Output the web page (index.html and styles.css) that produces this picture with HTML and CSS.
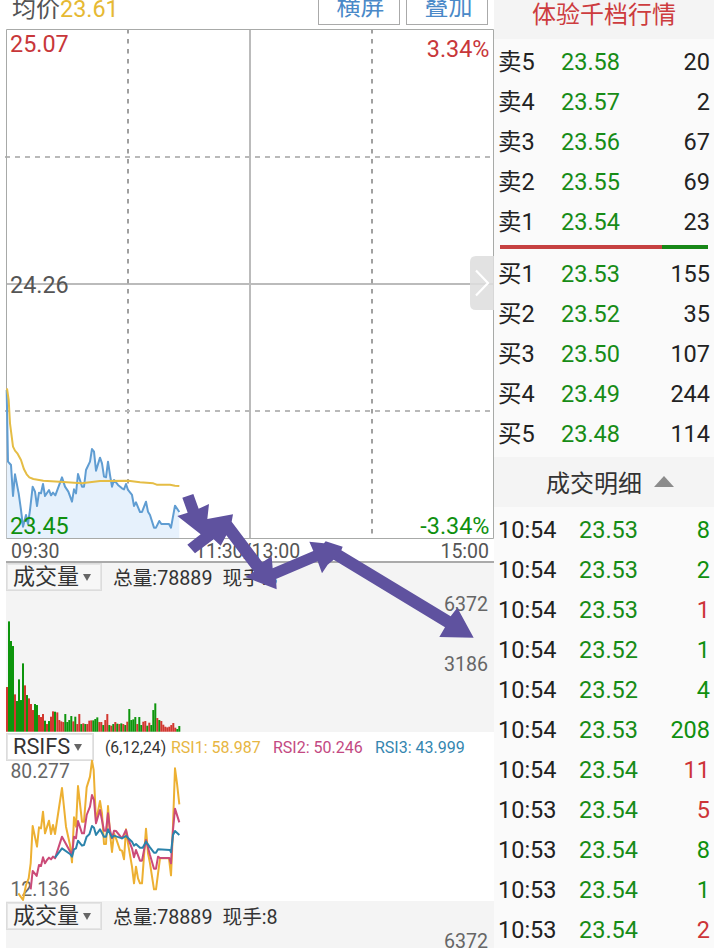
FILE: index.html
```html
<!DOCTYPE html>
<html lang="zh-CN">
<head>
<meta charset="utf-8">
<title>分时行情</title>
<link rel="stylesheet" href="styles.css">
</head>
<body>
<main class="app">
  <section class="left">
    <header class="topbar">
      <div class="average">均价<span>23.61</span></div>
      <div class="buttons"><button>横屏</button><button>叠加</button></div>
    </header>
    <svg class="price" viewBox="6 29 488 510">
      <g class="axis">
        <path d="M250 29V539M6 284H494"/>
        <path class="dash-v" d="M128 29V535M372 29V535"/>
        <path class="dash-h" d="M5 157H494M5 411H494"/>
      </g>
      <path class="frame" d="M6.500 29.500H493.500V538.500H6.500Z"/>
      <g transform="translate(0 380) scale(.33333)">
        <path class="area" d="M20 30L24 245 33 255 39 348 45 283 56 340 63 390 69 440 78 405 84 432 90 390 98 320 105 335 111 378 117 338 123 340 129 312 135 348 147 330 153 346 159 338 166 346 186 292 195 320 205 335 216 365 222 328 228 340 234 282 246 320 252 320 258 270 270 245 276 207 282 215 288 272 300 233 306 250 312 290 318 292 324 245 330 285 336 320 342 300 354 315 366 325 372 328 378 312 384 330 396 345 402 378 408 367 420 396 426 396 438 365 444 395 450 405 462 443 468 443 478 423 484 432 507 432 513 443 525 377 538 396V474H20Z"/>
        <path class="line blue" d="M20 30L24 245 33 255 39 348 45 283 56 340 63 390 69 440 78 405 84 432 90 390 98 320 105 335 111 378 117 338 123 340 129 312 135 348 147 330 153 346 159 338 166 346 186 292 195 320 205 335 216 365 222 328 228 340 234 282 246 320 252 320 258 270 270 245 276 207 282 215 288 272 300 233 306 250 312 290 318 292 324 245 330 285 336 320 342 300 354 315 366 325 372 328 378 312 384 330 396 345 402 378 408 367 420 396 426 396 438 365 444 395 450 405 462 443 468 443 478 423 484 432 507 432 513 443 525 377 538 396"/>
        <path class="line gold" d="M21 25L26 60 30 130 39 200 45 212 52 220 63 240 72 268 80 283 88 292 100 297 130 302 190 306 245 310 300 303 385 302 420 307 460 310 470 314 510 314 525 317 538 318"/>
      </g>
      <g class="scale">
        <text class="up" x="10" y="52">25.07</text>
        <text class="up" x="489.500" y="57" text-anchor="end">3.34%</text>
        <text x="10" y="293">24.26</text>
        <text class="down" x="10" y="534">23.45</text>
        <text class="down" x="489.500" y="534" text-anchor="end">-3.34%</text>
      </g>
      <path class="tab" d="M494 256H476Q470 256 470 262V304Q470 310 476 310H494Z"/>
      <path class="chevron" d="M476 270.500L488 283 476 295.500"/>
    </svg>
    <div class="times"><span>09:30</span><span>11:30/13:00</span><span>15:00</span></div>
    <section class="panel volume">
      <div class="panel-head"><button class="select">成交量<i></i></button><span>总量:78889</span><span>现手:8</span></div>
      <svg class="plot" id="bars" viewBox="6 604 488 128">
        <text x="488" y="610.500" text-anchor="end">6372</text>
        <text x="488" y="670.500" text-anchor="end">3186</text>
      </svg>
    </section>
    <section class="panel rsi">
      <div class="panel-head"><button class="select">RSIFS<i></i></button><div class="rsi-values"><span>(6,12,24)</span><span class="c1">RSI1: 58.987</span><span class="c2">RSI2: 50.246</span><span class="c3">RSI3: 43.999</span></div></div>
      <svg class="plot" viewBox="6 760 488 141">
        <text class="rsi-scale" x="10.500" y="778">80.277</text>
        <text class="rsi-scale" x="10.500" y="896">12.136</text>
        <g transform="translate(0 730) scale(.33333)">
          <path class="line amber" d="M55 490L69 510 78 465 86 445 92 400 98 288 111 350 117 292 123 295 129 245 135 310 147 272 153 312 159 285 165 312 186 174 198 290 210 345 216 397 222 262 228 290 234 168 246 275 252 275 260 172 270 140 276 92 281 120 288 275 300 213 306 250 312 342 318 342 324 228 330 310 336 366 342 310 348 325 360 360 366 362 372 388 378 298 384 340 396 410 402 460 408 410 414 445 420 460 426 460 438 296 444 370 450 400 462 478 468 478 480 385 507 385 513 436 516 370 525 115 531 160 538 223"/>
          <path class="line pink" d="M92 478L98 423 110 438 117 405 123 408 129 382 135 400 141 390 147 383 153 388 159 380 165 385 186 320 216 375 222 320 228 325 234 273 246 310 252 310 260 255 270 230 276 195 282 210 288 280 300 240 312 302 318 302 324 250 330 300 336 325 342 302 348 303 366 325 378 300 384 325 396 355 402 382 408 360 420 392 426 392 438 330 450 375 462 416 468 416 474 380 480 384 508 384 513 400 519 300 525 236 538 277"/>
          <path class="line teal" d="M165 383L186 355 210 372 216 380 222 358 228 355 234 332 246 347 252 345 260 320 268 313 276 288 282 293 288 315 300 298 312 320 318 320 324 298 336 323 342 317 366 325 378 318 396 335 402 347 408 342 420 353 428 353 438 335 450 352 462 368 468 368 474 358 510 360 513 367 519 315 525 303 538 315"/>
        </g>
      </svg>
    </section>
    <section class="panel volume second">
      <div class="panel-head"><button class="select">成交量<i></i></button><span>总量:78889</span><span>现手:8</span></div>
      <div class="max">6372</div>
    </section>
    <svg class="trend" viewBox="0 0 330 170">
      <g transform="scale(.33333)">
        <path d="M37 53L70 42 86 86 117 72 112 117 189 103 185 125 277 247 305 229 308 265 430 213 418 185 462 190 467 184 518 200 514 211 842 409 862 383 911 473 808 471 825 442 491 239 473 254 456 280 443 244 318 297 320 328 226 291 252 275 169 166 152 197 131 178 75 220 52 194 92 163 22 108 53 98Z"/>
      </g>
    </svg>
  </section>
  <aside class="right">
    <h2 class="depth-title">体验千档行情</h2>
    <div class="rows book">
      <div class="row"><span>卖5</span><b>23.58</b><em>20</em></div>
      <div class="row"><span>卖4</span><b>23.57</b><em>2</em></div>
      <div class="row"><span>卖3</span><b>23.56</b><em>67</em></div>
      <div class="row"><span>卖2</span><b>23.55</b><em>69</em></div>
      <div class="row"><span>卖1</span><b>23.54</b><em>23</em></div>
    </div>
    <div class="ratio"></div>
    <div class="rows book">
      <div class="row"><span>买1</span><b>23.53</b><em>155</em></div>
      <div class="row"><span>买2</span><b>23.52</b><em>35</em></div>
      <div class="row"><span>买3</span><b>23.50</b><em>107</em></div>
      <div class="row"><span>买4</span><b>23.49</b><em>244</em></div>
      <div class="row"><span>买5</span><b>23.48</b><em>114</em></div>
    </div>
    <h2 class="detail-title"><span>成交明细</span><i></i></h2>
    <div class="rows trades">
      <div class="row"><span>10:54</span><b>23.53</b><em class="down">8</em></div>
      <div class="row"><span>10:54</span><b>23.53</b><em class="down">2</em></div>
      <div class="row"><span>10:54</span><b>23.53</b><em class="up">1</em></div>
      <div class="row"><span>10:54</span><b>23.52</b><em class="down">1</em></div>
      <div class="row"><span>10:54</span><b>23.52</b><em class="down">4</em></div>
      <div class="row"><span>10:54</span><b>23.53</b><em class="down">208</em></div>
      <div class="row"><span>10:54</span><b>23.54</b><em class="up">11</em></div>
      <div class="row"><span>10:53</span><b>23.54</b><em class="up">5</em></div>
      <div class="row"><span>10:53</span><b>23.54</b><em class="down">8</em></div>
      <div class="row"><span>10:53</span><b>23.54</b><em class="down">1</em></div>
      <div class="row"><span>10:53</span><b>23.54</b><em class="up">2</em></div>
    </div>
  </aside>
</main>
<script src="bars.js"></script>
</body>
</html>
```
FILE: styles.css
```css
* { box-sizing: border-box; }
body { margin: 0; background: #fff; font-family: Roboto, "Noto Sans CJK SC", sans-serif; font-size: 24px; color: #222; }
button { font-family: inherit; padding: 0; margin: 0; }
svg { display: block; overflow: visible; }
.app { display: flex; width: 714px; height: 948px; overflow: hidden; }
.left { position: relative; width: 494px; padding-left: 6px; flex: none; }
.topbar { display: flex; justify-content: space-between; height: 29px; padding: 0 6px; overflow: hidden; }
.average { margin-top: -9px; line-height: 36px; color: #555; }
.average span { color: #e6b933; font-size: 23.400px; }
.buttons { display: flex; gap: 6px; }
.buttons button { width: 82px; height: 36px; margin-top: -11px; padding-left: 3px; border: 1px solid #aaa; background: #fff; color: #4a89c8; font-size: 24px; line-height: 34px; }
.price { width: 488px; height: 510px; }
.frame { fill: none; stroke: #a8aaa8; }
.axis path { fill: none; stroke: #bbb; stroke-width: 2; }
.axis .dash-v { stroke: #a0a0a0; stroke-dasharray: 4.500 5.500; }
.axis .dash-h { stroke: #b9b9b9; stroke-dasharray: 5 5; }
.area { fill: #e6f1fc; }
.line { fill: none; stroke-width: 6; stroke-linejoin: round; }
.blue { stroke: #609dd2; }
.gold { stroke: #e5bd45; }
.amber { stroke: #edb032; }
.pink { stroke: #cb4b78; }
.teal { stroke: #2b83ab; }
.scale text { fill: #555; font-size: 23.400px; }
.up, .scale .up { color: #cd3438; fill: #c8373a; }
.down, .scale .down { color: #0f900f; fill: #0f900f; }
.tab { fill: #dedede; fill-opacity: .87; }
.chevron { fill: none; stroke: #fff; stroke-width: 2.200; }
.times { display: grid; grid-template-columns: 184px 1fr auto; height: 24px; padding: 0 5px; border-bottom: 2px solid #aaa; color: #555; font-size: 19.500px; line-height: 25px; }
.panel { position: relative; }
.volume { height: 169px; background: #f4f4f4; }
.rsi { height: 169px; background: #fff; }
.panel-head { display: flex; height: 28px; gap: 10px; font-size: 19.700px; line-height: 28px; color: #333; }
.volume .panel-head { height: 41px; }
.panel-head > span { margin-top: 2px; }
.select { display: flex; align-items: center; flex: none; width: 96px; height: 28px; margin: 0 1px 0 0; padding-left: 6px; border: 1px solid #dcdcdc; outline: 1px solid #e5e5e5; outline-offset: -2px; background: #f7f7f7; font-size: 22px; line-height: 26px; color: #333; }
.select i { margin-left: 4px; border: 4px solid transparent; border-top: 7px solid #666; border-bottom: 0; }
.plot { width: 488px; }
.plot text { fill: #666; font-size: 19.600px; }
.plot .rsi-scale { font-size: 19.300px; }
.volume .plot { height: 128px; }
.rsi .plot { height: 141px; }
.rsi .select { width: 88px; margin-top: 1px; background: #fff; font-size: 21.800px; }
.rsi-values { display: flex; font-size: 16px; margin-top: 2px; }
.rsi-values span:first-child { width: 66px; font-size: 15.700px; }
.c1 { color: #e7b642; width: 102px; }
.c2 { color: #c34982; width: 102px; }
.c3 { color: #3586b0; }
.bar-up { fill: #d2372f; }
.bar-down { fill: #0d950c; }
.second { height: 47px; overflow: hidden; }
.second .panel-head { height: 31px; padding-top: 1px; }
.max { padding-right: 6px; color: #666; font-size: 19.600px; line-height: 20px; text-align: right; }
.trend { position: absolute; left: 170px; top: 480px; width: 330px; height: 170px; fill: #5f529f; }
.right { width: 220px; flex: none; background: #fafafa; }
h2 { margin: 0; font-size: 24px; font-weight: 400; background: #f4f4f4; }
.depth-title { height: 39px; padding-left: 38px; line-height: 31px; color: #cd3c3e; margin-bottom: 3px; }
.row { display: grid; height: 40px; padding: 0 4px; line-height: 40px; font-size: 23.500px; }
.book .row { grid-template-columns: 63px 80px 1fr; }
.trades .row { grid-template-columns: 81px 80px 1fr; }
.row b { color: #178c17; font-weight: 400; }
.row em { font-style: normal; text-align: right; }
.ratio { height: 4px; margin: 3px 6px 5px; background: linear-gradient(90deg, #c64141 0 162px, #178717 162px); }
.detail-title { display: flex; align-items: center; height: 50px; margin: 3px 0; padding-left: 52px; color: #333; }
.detail-title span { margin-top: -2px; }
.detail-title i { margin-left: 12px; margin-top: -1px; border: 10px solid transparent; border-bottom: 11px solid #8b8b8b; border-top: 0; }
```
FILE: bars.js
```js
// Direction (r = up, g = down) and height of each minute's volume, in thirds of a pixel.
const volumes = "r134 g331 g272 g257 r112 g92 g157 g95 g205 r139 g110 r100 r83 r65 g83 g80 r50 r44 r53 g33 r23 g32 r45 r61 g60 r58 r35 r31 r29 g53 g29 g35 g47 r31 g45 r23 r53 g23 r25 g23 r23 r33 r34 g34 g38 g43 r29 r29 g20 r35 r53 g20 r18 g23 r29 g24 r23 g25 r23 g20 r30 g68 g35 g37 g44 r23 g44 g20 r30 r32 g18 r27 g20 g65 g85 r41 g35 r32 r21 r15 r13 r15 r20 r26 r12 g8 g17".split(" ");
const chart = document.getElementById("bars");
volumes.forEach((item, i) => {
  const bar = document.createElementNS("http://www.w3.org/2000/svg", "rect");
  const height = Number(item.slice(1)) / 3;
  bar.setAttribute("class", item[0] === "r" ? "bar-up" : "bar-down");
  bar.setAttribute("x", 6 + i * 2 + (i > 24 ? 0.300 : 0));
  bar.setAttribute("y", 731.700 - height);
  bar.setAttribute("width", 2);
  bar.setAttribute("height", height);
  chart.appendChild(bar);
});
```
